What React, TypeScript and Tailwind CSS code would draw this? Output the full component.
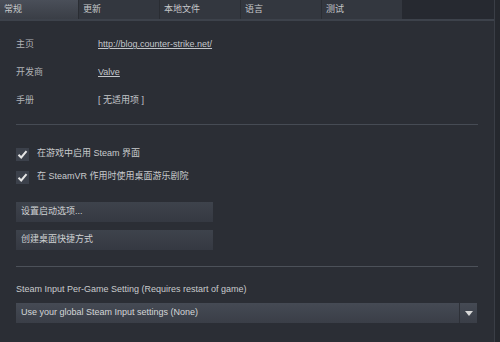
import React from "react";

const font = { fontFamily: '"Liberation Sans", Arial, "Noto Sans CJK SC", sans-serif' };

function Check({ label }: { label: string }) {
  return (
    <div className="flex items-center gap-[8px] h-[14px]">
      <div className="w-[13px] h-[13px] bg-[#3c414b] flex items-center justify-center">
        <svg width="11" height="11" viewBox="0 0 11 11">
          <path d="M1.5 5.8 L4.2 8.5 L9.5 2.2" stroke="#e6e6e6" strokeWidth="2" fill="none" />
        </svg>
      </div>
      <span className="text-[9px] text-[#c9cbcd]">{label}</span>
    </div>
  );
}

export default function App() {
  const tabs = ["常规", "更新", "本地文件", "语言", "测试"];
  return (
    <div style={font} className="w-[500px] h-[342px] bg-[#2b2e35] flex overflow-hidden">
      <div className="w-[494px] flex flex-col">
        <div className="flex h-[19px]">
          {tabs.map((t, i) => (
            <div
              key={t}
              className={
                (i === 0 ? "bg-gradient-to-b from-[#4a4f59] to-[#3a3e46] w-[78px] " : "bg-[#33373f] w-[81px] border-l border-[#2a2d33] ") +
                "h-full flex items-center pl-[4px] text-[9px] text-[#c6c8ca]"
              }
            >
              {t}
            </div>
          ))}
          <div className="flex-1 bg-[#262930]" />
        </div>
        <div className="h-[2px] bg-[#3d424b]" />
        <div className="px-[16px] flex flex-col">
          <div className="flex items-center mt-[18px] h-[12px] text-[9px]">
            <span className="w-[82px] text-[#b0b3b7]">主页</span>
            <span className="text-[#c3c6ca] underline">http://blog.counter-strike.net/</span>
          </div>
          <div className="flex items-center mt-[16px] h-[12px] text-[9px]">
            <span className="w-[82px] text-[#b0b3b7]">开发商</span>
            <span className="text-[#c3c6ca] underline">Valve</span>
          </div>
          <div className="flex items-center mt-[16px] h-[12px] text-[9px]">
            <span className="w-[82px] text-[#b0b3b7]">手册</span>
            <span className="text-[#c3c6ca]">[ 无适用项 ]</span>
          </div>
          <div className="mt-[17px] h-[1px] w-[462px] bg-[#464b54]" />
          <div className="mt-[22px] flex flex-col gap-[9px]">
            <Check label="在游戏中启用 Steam 界面" />
            <Check label="在 SteamVR 作用时使用桌面游乐剧院" />
          </div>
          <div className="mt-[18px] flex flex-col gap-[8px] w-[197px]">
            <div className="h-[20px] bg-gradient-to-b from-[#3e434c] to-[#353942] flex items-center pl-[5px] text-[9px] text-[#d0d2d4]">
              设置启动选项...
            </div>
            <div className="h-[20px] bg-gradient-to-b from-[#3e434c] to-[#353942] flex items-center pl-[5px] text-[9px] text-[#d0d2d4]">
              创建桌面快捷方式
            </div>
          </div>
          <div className="mt-[16px] h-[1px] w-[462px] bg-[#4c5159]" />
          <div className="mt-[17px] text-[9px] text-[#c9cbcd] h-[12px] flex items-center">
            Steam Input Per-Game Setting (Requires restart of game)
          </div>
          <div className="mt-[7px] h-[20px] w-[461px] flex bg-gradient-to-b from-[#454a54] to-[#3a3e47]">
            <div className="flex-1 flex items-center pl-[5px] text-[9px] text-[#d4d6d8]">
              Use your global Steam Input settings (None)
            </div>
            <div className="w-[18px] border-l border-[#2e3138] flex items-center justify-center">
              <svg width="8" height="5" viewBox="0 0 8 5">
                <path d="M0 0 L8 0 L4 5 Z" fill="#d8d8d8" />
              </svg>
            </div>
          </div>
        </div>
      </div>
      <div className="w-[1px] bg-[#3a3e46]" />
      <div className="flex-1 bg-[#25282e]" />
    </div>
  );
}
